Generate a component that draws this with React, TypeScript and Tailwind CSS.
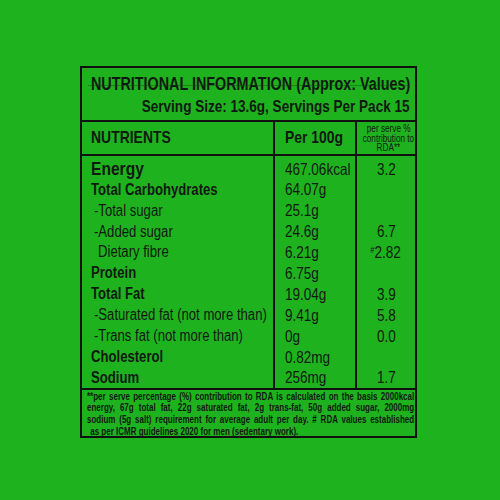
import React from "react";

type Row = { name: string; val: string; rda: string; bold?: boolean; big?: boolean; indent?: string };

const rows: Row[] = [
  { name: "Energy", val: "467.06kcal", rda: "3.2", bold: true, big: true },
  { name: "Total Carbohydrates", val: "64.07g", rda: "", bold: true },
  { name: "-Total sugar", val: "25.1g", rda: "", indent: "pl-[3px]" },
  { name: "-Added sugar", val: "24.6g", rda: "6.7", indent: "pl-[3px]" },
  { name: "Dietary fibre", val: "6.21g", rda: "#2.82", indent: "pl-[7px]" },
  { name: "Protein", val: "6.75g", rda: "", bold: true },
  { name: "Total Fat", val: "19.04g", rda: "3.9", bold: true },
  { name: "-Saturated fat (not more than)", val: "9.41g", rda: "5.8", indent: "pl-[3px]" },
  { name: "-Trans fat (not more than)", val: "0g", rda: "0.0", indent: "pl-[3px]" },
  { name: "Cholesterol", val: "0.82mg", rda: "", bold: true },
  { name: "Sodium", val: "256mg", rda: "1.7", bold: true },
];

function N({ children, origin = "origin-left", className = "" }: { children: React.ReactNode; origin?: string; className?: string }) {
  return <span className={`inline-block whitespace-nowrap scale-x-[0.82] ${origin} ${className}`}>{children}</span>;
}

export default function App() {
  return (
    <div
      className="w-[500px] h-[500px] bg-[#1fb21f] text-[#0f1a0f] flex items-start justify-start"
      style={{ fontFamily: '"Liberation Sans", Arial, sans-serif' }}
    >
      <div className="ml-[80px] mt-[66px] w-[337px] h-[372px] border-2 border-[#111] flex flex-col overflow-hidden">
        {/* title */}
        <div className="relative h-[53px] flex flex-col pt-[6px]">
          <div className="pl-[9px] text-[17.5px] font-bold leading-[21px]">
            <N>NUTRITIONAL INFORMATION (Approx: Values)</N>
          </div>
          <div className="flex justify-end pr-[5px] text-[16.5px] font-bold leading-[23px]">
            <N origin="origin-right">Serving Size: 13.6g, Servings Per Pack 15</N>
          </div>
          <div className="absolute left-[6px] right-[5px] top-[17px] h-px bg-[#1b3a1b] opacity-40" />
        </div>
        {/* header */}
        <div className="grid grid-cols-[193px_82px_1fr] border-t-2 border-[#111] h-[35px]">
          <div className="border-r-2 border-[#111] flex items-center pl-[9px] text-[17px] font-bold">
            <N>NUTRIENTS</N>
          </div>
          <div className="border-r-2 border-[#111] flex items-center pl-[10px] text-[17px] font-bold">
            <N>Per 100g</N>
          </div>
          <div className="flex flex-col items-center justify-center text-[10px] leading-[9.5px] font-normal text-center pt-[1px]">
            <N origin="origin-center">per serve %</N>
            <N origin="origin-center">contribution to</N>
            <N origin="origin-center">RDA**</N>
          </div>
        </div>
        {/* body */}
        <div className="grid grid-cols-[193px_82px_1fr] border-t-2 border-[#111] flex-1">
          <div className="border-r-2 border-[#111] flex flex-col pt-[2.5px] pl-[9px]">
            {rows.map((r, i) => (
              <div
                key={i}
                className={`h-[20.9px] flex items-center ${r.big ? "text-[19px]" : "text-[16px]"} ${r.bold ? "font-bold" : "font-normal"} ${r.indent ?? ""}`}
              >
                <N>{r.name}</N>
              </div>
            ))}
          </div>
          <div className="border-r-2 border-[#111] flex flex-col pt-[2.5px] pl-[10px]">
            {rows.map((r, i) => (
              <div key={i} className="h-[20.9px] flex items-center text-[16.5px]">
                <N>{r.val}</N>
              </div>
            ))}
          </div>
          <div className="flex flex-col pt-[2.5px] items-center">
            {rows.map((r, i) => (
              <div key={i} className="h-[20.9px] flex items-center justify-center text-[16.5px]">
                <N origin="origin-center">
                  {r.rda.startsWith("#") ? (
                    <>
                      <span className="text-[9px] relative -top-[5px]">#</span>
                      {r.rda.slice(1)}
                    </>
                  ) : (
                    r.rda
                  )}
                </N>
              </div>
            ))}
          </div>
        </div>
        {/* footer */}
        <div className="border-t-2 border-[#111] h-[49px] pl-[5px] pt-[0.5px] overflow-hidden">
          <div className="w-[409px] origin-top-left scale-x-[0.8] text-[10px] leading-[11.7px] font-bold whitespace-nowrap">
            <div className="text-justify [text-align-last:justify]">
              **per serve percentage (%) contribution to RDA is calculated on the basis 2000kcal
            </div>
            <div className="text-justify [text-align-last:justify]">
              energy, 67g total fat, 22g saturated fat, 2g trans-fat, 50g added sugar, 2000mg
            </div>
            <div className="text-justify [text-align-last:justify]">
              sodium (5g salt) requirement for average adult per day. # RDA values established
            </div>
            <div className="pl-[4px]">as per ICMR guidelines 2020 for men (sedentary work).</div>
          </div>
        </div>
      </div>
    </div>
  );
}
